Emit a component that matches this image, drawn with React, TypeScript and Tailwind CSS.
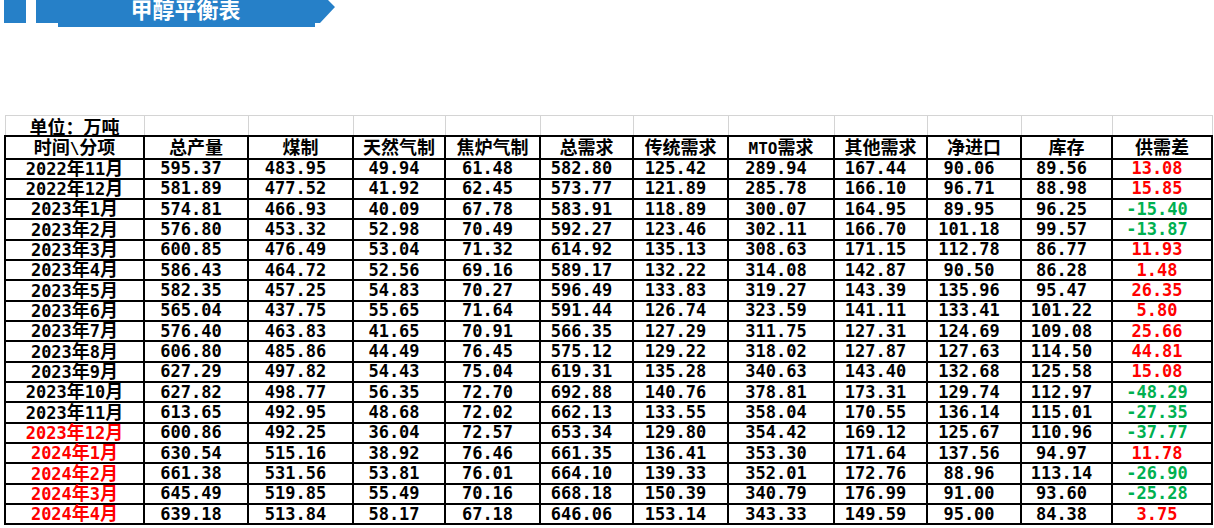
import React from "react";

const headers = ["总产量", "煤制", "天然气制", "焦炉气制", "总需求", "传统需求", "MTO需求", "其他需求", "净进口", "库存", "供需差"];

const rows: string[][] = [
  ["2022年11月","595.37","483.95","49.94","61.48","582.80","125.42","289.94","167.44","90.06","89.56","13.08"],
  ["2022年12月","581.89","477.52","41.92","62.45","573.77","121.89","285.78","166.10","96.71","88.98","15.85"],
  ["2023年1月","574.81","466.93","40.09","67.78","583.91","118.89","300.07","164.95","89.95","96.25","-15.40"],
  ["2023年2月","576.80","453.32","52.98","70.49","592.27","123.46","302.11","166.70","101.18","99.57","-13.87"],
  ["2023年3月","600.85","476.49","53.04","71.32","614.92","135.13","308.63","171.15","112.78","86.77","11.93"],
  ["2023年4月","586.43","464.72","52.56","69.16","589.17","132.22","314.08","142.87","90.50","86.28","1.48"],
  ["2023年5月","582.35","457.25","54.83","70.27","596.49","133.83","319.27","143.39","135.96","95.47","26.35"],
  ["2023年6月","565.04","437.75","55.65","71.64","591.44","126.74","323.59","141.11","133.41","101.22","5.80"],
  ["2023年7月","576.40","463.83","41.65","70.91","566.35","127.29","311.75","127.31","124.69","109.08","25.66"],
  ["2023年8月","606.80","485.86","44.49","76.45","575.12","129.22","318.02","127.87","127.63","114.50","44.81"],
  ["2023年9月","627.29","497.82","54.43","75.04","619.31","135.28","340.63","143.40","132.68","125.58","15.08"],
  ["2023年10月","627.82","498.77","56.35","72.70","692.88","140.76","378.81","173.31","129.74","112.97","-48.29"],
  ["2023年11月","613.65","492.95","48.68","72.02","662.13","133.55","358.04","170.55","136.14","115.01","-27.35"],
  ["2023年12月","600.86","492.25","36.04","72.57","653.34","129.80","354.42","169.12","125.67","110.96","-37.77"],
  ["2024年1月","630.54","515.16","38.92","76.46","661.35","136.41","353.30","171.64","137.56","94.97","11.78"],
  ["2024年2月","661.38","531.56","53.81","76.01","664.10","139.33","352.01","172.76","88.96","113.14","-26.90"],
  ["2024年3月","645.49","519.85","55.49","70.16","668.18","150.39","340.79","176.99","91.00","93.60","-25.28"],
  ["2024年4月","639.18","513.84","58.17","67.18","646.06","153.14","343.33","149.59","95.00","84.38","3.75"],
];

const colWidths = ["w-[139px]","w-[104px]","w-[105px]","w-[92px]","w-[95px]","w-[93px]","w-[95px]","w-[106px]","w-[93px]","w-[94px]","w-[91px]","w-[100px]"];

function DateText({ s }: { s: string }) {
  const parts = s.split(/(年|月)/).filter(Boolean);
  return (
    <>
      {parts.map((p, i) =>
        p === "年" || p === "月" ? (
          <span key={i} className="text-[18px] leading-[17px]">{p}</span>
        ) : (
          <span key={i}>{p}</span>
        )
      )}
    </>
  );
}

export default function App() {
  return (
    <div className="w-[1214px] h-[528px] bg-white overflow-hidden font-['DejaVu_Sans_Mono','Noto_Sans_CJK_SC',monospace] text-black">
      {/* Banner */}
      <div className="flex items-start h-[27px]">
        <div className="ml-[4px] w-[22px] h-[23px] bg-[#2680c8]" />
        <div className="ml-[10px] w-[299px] h-[27px] bg-[#2680c8] [clip-path:polygon(0_0,292px_0,299px_7px,284px_23px,279px_23px,279px_27px,22px_27px,22px_23px,0_23px)] flex justify-center overflow-hidden">
          <span className="mt-[-3px] text-[22px] leading-[22px] font-bold text-white font-['Noto_Sans_CJK_SC',sans-serif]">甲醇平衡表</span>
        </div>
      </div>

      {/* Table */}
      <table className="ml-[4px] mt-[88px] table-fixed border-collapse w-[1209px] font-bold text-[17px]">
        <colgroup>
          {colWidths.map((w, i) => (
            <col key={i} className={w} />
          ))}
        </colgroup>
        <tbody>
          <tr className="h-[20px]">
            <td className="border border-[#d4d4d4] text-center leading-[17px] p-0 text-[18px] font-['Noto_Sans_CJK_SC',sans-serif] align-bottom">单位：万吨</td>
            {headers.map((_, i) => (
              <td key={i} className="border border-[#d4d4d4] p-0" />
            ))}
          </tr>
          <tr className="h-[21px]">
            <td className="border-2 border-black text-center leading-[18px] p-0 text-[18px]">
              <span className="font-['Noto_Sans_CJK_SC',sans-serif]">时间</span>
              <span className="font-['DejaVu_Sans_Mono',monospace] text-[16px]">\</span>
              <span className="font-['Noto_Sans_CJK_SC',sans-serif]">分项</span>
            </td>
            {headers.map((h, i) => (
              <td key={i} className="border-2 border-black text-center leading-[18px] p-0 text-[18px]">
                {h.startsWith("MTO") ? (
                  <>
                    <span className="text-[16px]">MTO</span>
                    <span className="font-['Noto_Sans_CJK_SC',sans-serif]">需求</span>
                  </>
                ) : (
                  <span className="font-['Noto_Sans_CJK_SC',sans-serif]">{h}</span>
                )}
              </td>
            ))}
          </tr>
          {rows.map((r, ri) => (
            <tr key={ri} className="h-[20.33px]">
              <td className={`border-2 border-black text-center leading-[17px] p-0 ${ri >= 13 ? "text-[#ff0000]" : ""}`}>
                <DateText s={r[0]} />
              </td>
              {r.slice(1).map((v, ci) => {
                const last = ci === r.length - 2;
                const color = last ? (v.startsWith("-") ? "text-[#00b050]" : "text-[#ff0000]") : "";
                return (
                  <td key={ci} className={`border-2 border-black text-center leading-[17px] p-0 pr-[10px] ${color}`}>
                    {v}
                  </td>
                );
              })}
            </tr>
          ))}
        </tbody>
      </table>
    </div>
  );
}
